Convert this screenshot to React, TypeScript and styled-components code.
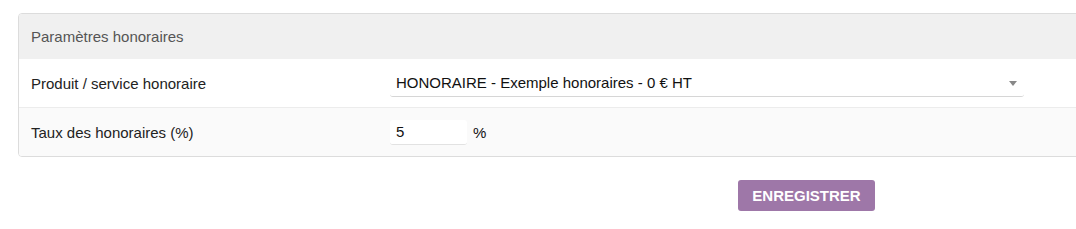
import styled, { createGlobalStyle } from "styled-components"

const GlobalStyle = createGlobalStyle`
  html, body {
    margin: 0;
    padding: 0;
    background: #fff;
    overflow: hidden;
  }
  body {
    font-family: "Liberation Sans", Arial, sans-serif;
    color: #222;
  }
`

const Page = styled.div`
  padding: 13px 0 0 18px;
`

const Form = styled.form`
  width: 1577px;
  display: flex;
  flex-direction: column;
  gap: 23px;
`

const Panel = styled.div`
  border: 1px solid #dcdcdc;
  border-radius: 4px;
  overflow: hidden;
`

const PanelHeader = styled.div`
  height: 45px;
  display: flex;
  align-items: center;
  padding: 0 12px;
  background: #f0f0f0;
  color: #555;
  font-size: 15px;
`

const Row = styled.div<{ $alt?: boolean }>`
  height: 48px;
  display: grid;
  grid-template-columns: 359px 1fr;
  align-items: center;
  padding: 0 12px;
  background: ${(p) => (p.$alt ? "#fafafa" : "#fff")};
  & + & {
    border-top: 1px solid #ececec;
  }
`

const Label = styled.label`
  font-size: 15px;
  color: #222;
`

const Field = styled.div`
  display: flex;
  align-items: center;
  gap: 6px;
`

const Select = styled.div`
  position: relative;
  width: 634px;
  height: 28px;
  display: flex;
  align-items: center;
  padding: 0 6px;
  box-sizing: border-box;
  background: #fff;
  border-bottom: 1px solid #d6d6d6;
  border-radius: 3px;
  font-size: 15px;
  color: #111;
`

const Caret = styled.span`
  position: absolute;
  right: 7px;
  top: 12px;
  width: 0;
  height: 0;
  border-left: 4px solid transparent;
  border-right: 4px solid transparent;
  border-top: 5px solid #888;
`

const Input = styled.input`
  width: 77px;
  height: 25px;
  box-sizing: border-box;
  padding: 0 6px;
  border: none;
  border-bottom: 1px solid #e2e2e2;
  border-radius: 3px;
  background: #fff;
  font-family: inherit;
  font-size: 15px;
  color: #111;
  outline: none;
`

const Unit = styled.span`
  font-size: 15px;
  color: #111;
`

const Actions = styled.div`
  display: flex;
  justify-content: center;
`

const Button = styled.button`
  width: 137px;
  height: 31px;
  border: none;
  border-radius: 3px;
  background: #9e77a8;
  color: #fff;
  font-family: inherit;
  font-size: 15px;
  font-weight: 700;
  cursor: pointer;
`

export default function App() {
  return (
    <Page>
      <GlobalStyle />
      <Form onSubmit={(e) => e.preventDefault()}>
        <Panel>
          <PanelHeader>Paramètres honoraires</PanelHeader>
          <Row>
            <Label>Produit / service honoraire</Label>
            <Select>
              HONORAIRE - Exemple honoraires - 0 € HT
              <Caret />
            </Select>
          </Row>
          <Row $alt>
            <Label>Taux des honoraires (%)</Label>
            <Field>
              <Input defaultValue="5" />
              <Unit>%</Unit>
            </Field>
          </Row>
        </Panel>
        <Actions>
          <Button type="submit">ENREGISTRER</Button>
        </Actions>
      </Form>
    </Page>
  )
}
